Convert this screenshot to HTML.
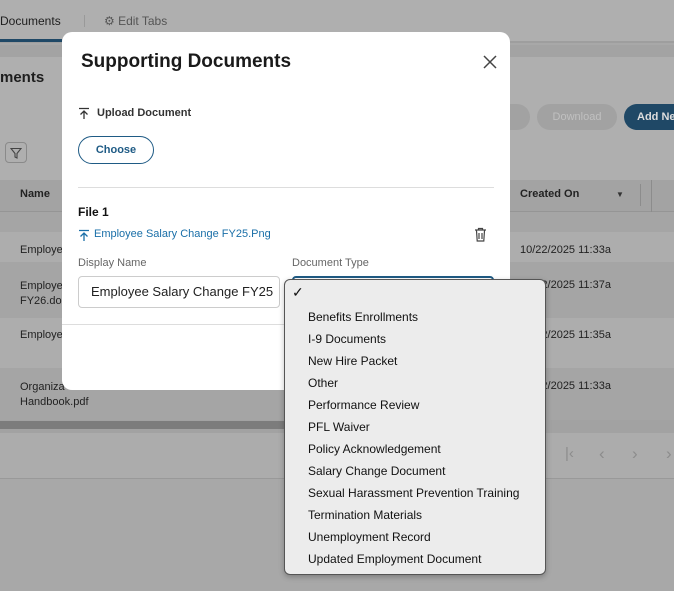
<!DOCTYPE html>
<html><head><style>
*{box-sizing:border-box;margin:0;padding:0}
body{width:674px;height:591px;overflow:hidden;background:#a8a8a8;font-family:"Liberation Sans",sans-serif;position:relative;font-size:12px;color:#222}
.a{position:absolute}
.row{position:absolute;left:0;width:674px}
</style></head><body>
<div class="row" style="top:0;height:43px;background:#afafaf;border-bottom:2px solid #9e9e9e"></div>
<div class="a" style="left:0;top:14px;font-size:12px;color:#1e1e1e">Documents</div>
<div class="a" style="left:0;top:39px;width:62px;height:3px;background:#1f4866"></div>
<div class="a" style="left:84px;top:15px;width:1px;height:12px;background:#999"></div>
<div class="a" style="left:104px;top:14px;font-size:12px;color:#555">⚙ Edit Tabs</div>
<div class="row" style="top:45px;height:12px;background:#a3a3a3"></div>
<div class="row" style="top:57px;height:123px;background:#afafaf"></div>
<div class="a" style="left:0;top:69px;font-size:15px;font-weight:bold;color:#1e1e1e">ments</div>
<div class="a" style="left:480px;top:104px;width:50px;height:26px;border-radius:13px;background:#a2a2a2"></div>
<div class="a" style="left:537px;top:104px;width:80px;height:26px;border-radius:13px;background:#a2a2a2;color:#c0c0c0;font-size:11px;text-align:center;line-height:26px">Download</div>
<div class="a" style="left:624px;top:104px;width:70px;height:26px;border-radius:13px;background:#1f4866;color:#ddd;font-size:11px;font-weight:bold;line-height:26px;padding-left:13px">Add Ne</div>
<div class="a" style="left:5px;top:142px;width:22px;height:21px;border:1px solid #8a8a8a;border-radius:4px"></div>
<svg class="a" style="left:10px;top:147px" width="12" height="12"><path d="M1 1.5H11L7 6.5V11L5 10V6.5Z" stroke="#444" stroke-width="1.1" fill="none"/></svg>
<div class="row" style="top:180px;height:32px;background:#a3a3a3;border-bottom:1px solid #959595"></div>
<div class="a" style="left:20px;top:188px;font-weight:bold;font-size:11px;color:#222">Name</div>
<div class="a" style="left:520px;top:188px;font-weight:bold;font-size:11px;color:#222">Created On</div>
<div class="a" style="left:616px;top:190px;font-size:8px;color:#333">▼</div>
<div class="a" style="left:640px;top:184px;width:1px;height:22px;background:#8c8c8c"></div>
<div class="a" style="left:651px;top:180px;width:1px;height:240px;background:#8c8c8c"></div>
<div class="row" style="top:212px;height:20px;background:#a5a5a5"></div>
<div class="row" style="top:232px;height:30px;background:#adadad"></div>
<div class="row" style="top:262px;height:56px;background:#a5a5a5"></div>
<div class="row" style="top:318px;height:50px;background:#adadad"></div>
<div class="row" style="top:368px;height:52px;background:#a5a5a5"></div>
<div class="a" style="left:20px;top:244px;font-size:11px;color:#222">Employe</div>
<div class="a" style="left:20px;top:279px;font-size:11px;line-height:15px;color:#222">Employe<br>FY26.do</div>
<div class="a" style="left:20px;top:329px;font-size:11px;color:#222">Employe</div>
<div class="a" style="left:20px;top:380px;font-size:11px;line-height:15px;color:#222">Organiza<br>Handbook.pdf</div>
<div class="a" style="left:520px;top:244px;font-size:11px;color:#222">10/22/2025 11:33a</div>
<div class="a" style="left:520px;top:279px;font-size:11px;color:#222">10/22/2025 11:37a</div>
<div class="a" style="left:520px;top:329px;font-size:11px;color:#222">10/22/2025 11:35a</div>
<div class="a" style="left:520px;top:380px;font-size:11px;color:#222">10/22/2025 11:33a</div>
<div class="row" style="top:420px;height:13px;background:#a2a2a2"></div>
<div class="a" style="left:0;top:421px;width:290px;height:8px;background:#7c7c7c"></div>
<div class="row" style="top:433px;height:46px;background:#acacac;border-bottom:1px solid #999"></div>
<div class="a" style="left:565px;top:445px;font-size:15px;color:#8c8c8c;letter-spacing:0">|‹</div>
<div class="a" style="left:599px;top:444px;font-size:17px;color:#8c8c8c">‹</div>
<div class="a" style="left:632px;top:444px;font-size:17px;color:#8c8c8c">›</div>
<div class="a" style="left:666px;top:444px;font-size:17px;color:#8c8c8c">›</div>

<div class="a" style="left:62px;top:32px;width:448px;height:358px;background:#fff;border-radius:10px"></div>
<div class="a" style="left:81px;top:51px;font-size:19px;font-weight:bold;color:#1a1a1a">Supporting Documents</div>
<svg class="a" style="left:483px;top:55px" width="14" height="14"><path d="M1 1L13 13M13 1L1 13" stroke="#444" stroke-width="1.5"/></svg>
<svg class="a" style="left:78px;top:107px" width="12" height="13"><path d="M1 1.5H11M6 4V12M2.5 7.5L6 4L9.5 7.5" stroke="#333" stroke-width="1.3" fill="none"/></svg>
<div class="a" style="left:97px;top:107px;font-size:11px;font-weight:bold;color:#333">Upload Document</div>
<div class="a" style="left:78px;top:136px;width:76px;height:28px;border:1px solid #1f5b85;border-radius:14px;text-align:center;line-height:26px;font-size:11px;font-weight:bold;color:#1f5b85">Choose</div>
<div class="a" style="left:78px;top:187px;width:416px;height:1px;background:#ddd"></div>
<div class="a" style="left:78px;top:205px;font-size:12px;font-weight:bold;color:#111">File 1</div>
<svg class="a" style="left:78px;top:229px" width="12" height="13"><path d="M1 1.5H11M6 4V12M2.5 7.5L6 4L9.5 7.5" stroke="#1a6fa8" stroke-width="1.3" fill="none"/></svg>
<div class="a" style="left:94px;top:228px;font-size:11px;color:#1a6fa8">Employee Salary Change FY25.Png</div>
<svg class="a" style="left:474px;top:227px" width="13" height="15"><path d="M1 3H12M4.5 3V1.5H8.5V3M2.5 3.5L3.2 14H9.8L10.5 3.5M5 6V12M8 6V12" stroke="#444" stroke-width="1.2" fill="none"/></svg>
<div class="a" style="left:78px;top:257px;font-size:11px;color:#666">Display Name</div>
<div class="a" style="left:292px;top:257px;font-size:11px;color:#666">Document Type</div>
<div class="a" style="left:78px;top:276px;width:202px;height:32px;border:1px solid #ccc;border-radius:4px;font-size:13px;line-height:30px;padding-left:12px;overflow:hidden;white-space:nowrap;color:#222">Employee Salary Change FY25</div>
<div class="a" style="left:292px;top:276px;width:202px;height:32px;border:2px solid #1f5b85;border-radius:4px"></div>
<div class="a" style="left:62px;top:324px;width:448px;height:1px;background:#ddd"></div>

<div class="a" style="left:284px;top:279px;width:262px;height:296px;background:#ececec;border:1px solid #555;border-radius:6px;box-shadow:0 2px 6px rgba(0,0,0,.25)"></div>
<div class="a" style="left:292px;top:284px;font-size:14px;color:#111">✓</div>
<div class="a" style="left:308px;top:306px;font-size:12px;line-height:22px;color:#111">Benefits Enrollments<br>I-9 Documents<br>New Hire Packet<br>Other<br>Performance Review<br>PFL Waiver<br>Policy Acknowledgement<br>Salary Change Document<br>Sexual Harassment Prevention Training<br>Termination Materials<br>Unemployment Record<br>Updated Employment Document</div>
</body></html>
